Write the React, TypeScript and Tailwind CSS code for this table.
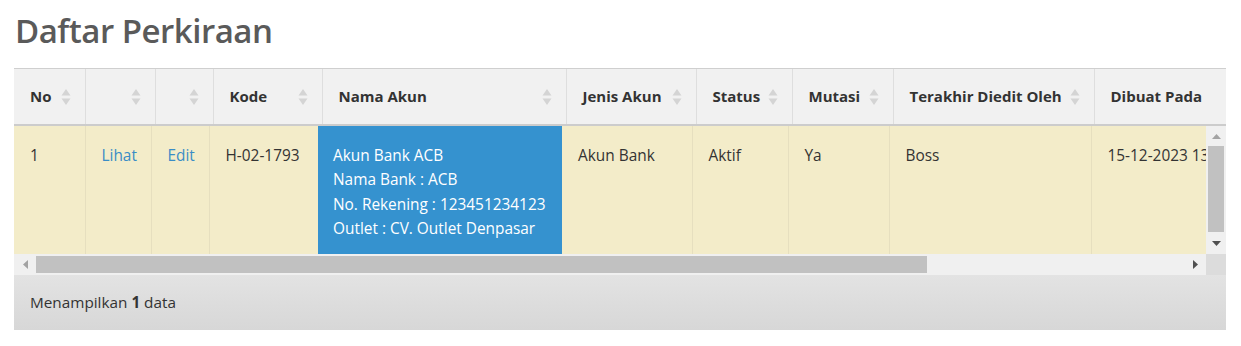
import React from "react";

const headW = [71, 70, 58, 109, 244, 130, 96, 101, 201, 160];
const bodyW = [71, 66, 58, 109, 244, 130, 96, 101, 202, 160];

function SortIcon() {
  return (
    <svg width="10" height="18" viewBox="0 0 10 18" className="shrink-0">
      <path d="M5 1 L9.5 7.5 H0.5 Z" fill="#d4d4d4" />
      <path d="M5 17 L9.5 10.5 H0.5 Z" fill="#d4d4d4" />
    </svg>
  );
}

const headers: { label: string; sort: boolean }[] = [
  { label: "No", sort: true },
  { label: "", sort: true },
  { label: "", sort: true },
  { label: "Kode", sort: true },
  { label: "Nama Akun", sort: true },
  { label: "Jenis Akun", sort: true },
  { label: "Status", sort: true },
  { label: "Mutasi", sort: true },
  { label: "Terakhir Diedit Oleh", sort: true },
  { label: "Dibuat Pada", sort: false },
];

export default function App() {
  return (
    <div
      className="w-[1241px] h-[346px] bg-white overflow-hidden"
      style={{ fontFamily: '"Open Sans", "Noto Sans", sans-serif' }}
    >
      <h1 className="pl-[15px] pt-[9px] h-[68px] text-[33px] leading-[44px] font-semibold text-[#5a5a5a] tracking-[-0.5px]">
        Daftar Perkiraan
      </h1>
      <div className="ml-[14px] w-[1212px]">
        {/* header */}
        <div className="overflow-hidden border-t border-[#cfcfcf] bg-[#f1f1f1] border-b-2 border-b-[#cccccc]">
          <table className="table-fixed border-collapse" style={{ width: headW.reduce((a, b) => a + b, 0) }}>
            <colgroup>
              {headW.map((w, i) => (
                <col key={i} style={{ width: w }} />
              ))}
            </colgroup>
            <thead>
              <tr className="h-[55px]">
                {headers.map((h, i) => (
                  <th
                    key={i}
                    className={`p-0 text-left align-middle text-[15px] font-bold text-[#333] ${i > 0 ? "border-l border-[#dedede]" : ""}`}
                  >
                    <div className="flex items-center justify-between pl-4 pr-[14px] whitespace-nowrap">
                      <span>{h.label}</span>
                      {h.sort && <SortIcon />}
                    </div>
                  </th>
                ))}
              </tr>
            </thead>
          </table>
        </div>
        {/* body + vertical scrollbar */}
        <div className="flex h-[128px]">
          <div className="w-[1192px] overflow-hidden bg-[#f3ecc9]">
            <table className="table-fixed border-collapse text-[15.4px] text-[#333]" style={{ width: bodyW.reduce((a, b) => a + b, 0) }}>
              <colgroup>
                {bodyW.map((w, i) => (
                  <col key={i} style={{ width: w }} />
                ))}
              </colgroup>
              <tbody>
                <tr className="h-[128px] align-top leading-[24.3px]">
                  <td className="pl-4 pt-[18px]">1</td>
                  <td className="pl-4 pt-[18px] border-l border-[#e6dfbf] text-[#3a8dc6]">Lihat</td>
                  <td className="pl-4 pt-[18px] border-l border-[#e6dfbf] text-[#3a8dc6]">Edit</td>
                  <td className="pl-4 pt-[18px] border-l border-[#e6dfbf] whitespace-nowrap">H-02-1793</td>
                  <td className="pl-[15px] pt-[18px] bg-[#3592cf] text-white whitespace-nowrap">
                    <div>Akun Bank ACB</div>
                    <div>Nama Bank : ACB</div>
                    <div>No. Rekening : 123451234123</div>
                    <div>Outlet : CV. Outlet Denpasar</div>
                  </td>
                  <td className="pl-4 pt-[18px] whitespace-nowrap">Akun Bank</td>
                  <td className="pl-4 pt-[18px] border-l border-[#e6dfbf]">Aktif</td>
                  <td className="pl-4 pt-[18px] border-l border-[#e6dfbf]">Ya</td>
                  <td className="pl-4 pt-[18px] border-l border-[#e6dfbf]">Boss</td>
                  <td className="pl-4 pt-[18px] border-l border-[#e6dfbf] whitespace-nowrap">15-12-2023 13:45</td>
                </tr>
              </tbody>
            </table>
          </div>
          <div className="w-[20px] bg-[#f0f0f0] flex flex-col items-center">
            <div className="h-[20px] w-full flex items-center justify-center">
              <svg width="9" height="5" viewBox="0 0 9 5"><path d="M4.5 0 L9 5 H0 Z" fill="#a3a3a3" /></svg>
            </div>
            <div className="w-[16px] h-[86px] bg-[#c1c1c1]" />
            <div className="flex-1 w-full flex items-center justify-center">
              <svg width="9" height="5" viewBox="0 0 9 5"><path d="M0 0 H9 L4.5 5 Z" fill="#505050" /></svg>
            </div>
          </div>
        </div>
        {/* horizontal scrollbar */}
        <div className="flex h-[21px]">
          <div className="w-[1192px] bg-[#f0f0f0] flex items-center">
            <div className="w-[22px] h-full flex items-center justify-center">
              <svg width="5" height="9" viewBox="0 0 5 9"><path d="M5 0 V9 L0 4.5 Z" fill="#a3a3a3" /></svg>
            </div>
            <div className="w-[891px] h-[17px] bg-[#c1c1c1]" />
            <div className="flex-1" />
            <div className="w-[22px] h-full flex items-center justify-center">
              <svg width="5" height="9" viewBox="0 0 5 9"><path d="M0 0 V9 L5 4.5 Z" fill="#505050" /></svg>
            </div>
          </div>
          <div className="w-[20px] bg-[#dcdcdc]" />
        </div>
        {/* footer */}
        <div className="h-[55px] bg-gradient-to-b from-[#e3e3e3] to-[#d7d7d7] flex items-center pl-4 text-[15.3px] text-[#333]">
          <span>
            Menampilkan <b>1</b> data
          </span>
        </div>
      </div>
    </div>
  );
}
